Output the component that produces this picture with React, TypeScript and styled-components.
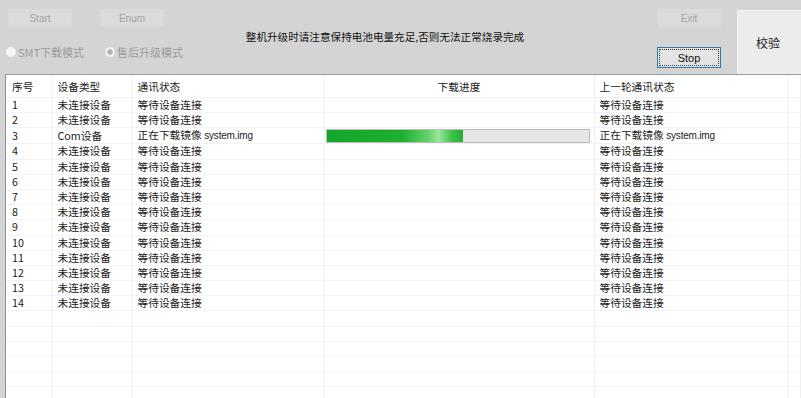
import styled, { createGlobalStyle } from "styled-components";

const GlobalStyle = createGlobalStyle`
  html, body {
    margin: 0;
    padding: 0;
    background: #d4d4d4;
  }
  body {
    font-family: "Liberation Sans", "Noto Sans CJK SC", sans-serif;
    font-size: 11px;
    color: #1e1e1e;
  }
`;

interface DeviceRow {
  id: number;
  type: string;
  status: string;
  file?: string;
  progress?: number;
}

const waiting = "等待设备连接";
const idle = "未连接设备";

const rows: DeviceRow[] = Array.from({ length: 14 }, (_, i) => {
  const id = i + 1;
  if (id === 3) {
    return {
      id,
      type: "Com设备",
      status: "正在下载镜像",
      file: "system.img",
      progress: 52,
    };
  }
  return { id, type: idle, status: waiting };
});

const fillerCount = 7;

const StatusText = ({ row }: { row: DeviceRow }) => (
  <>
    {row.status}
    {row.file && <FileName> {row.file}</FileName>}
  </>
);

const App = () => {
  return (
    <>
      <GlobalStyle />
      <Window>
        <TopPanel>
          <LeftControls>
            <ButtonRow>
              <FlatButton disabled>Start</FlatButton>
              <FlatButton disabled>Enum</FlatButton>
            </ButtonRow>
            <RadioRow>
              <RadioOption>
                <RadioDot />
                SMT下载模式
              </RadioOption>
              <RadioOption>
                <RadioDot $checked />
                售后升级模式
              </RadioOption>
            </RadioRow>
          </LeftControls>
          <Notice>整机升级时请注意保持电池电量充足,否则无法正常烧录完成</Notice>
          <RightControls>
            <FlatButton disabled>Exit</FlatButton>
            <StopButton>
              <FocusRing>Stop</FocusRing>
            </StopButton>
          </RightControls>
          <VerifyButton>校验</VerifyButton>
        </TopPanel>

        <TableArea>
          <Grid>
            <colgroup>
              <col style={{ width: 46 }} />
              <col style={{ width: 80 }} />
              <col style={{ width: 192 }} />
              <col style={{ width: 270 }} />
              <col style={{ width: 193 }} />
              <col />
            </colgroup>
            <thead>
              <tr>
                <HeadCell $first>序号</HeadCell>
                <HeadCell>设备类型</HeadCell>
                <HeadCell>通讯状态</HeadCell>
                <HeadCell $center>下载进度</HeadCell>
                <HeadCell>上一轮通讯状态</HeadCell>
                <HeadCell />
              </tr>
            </thead>
            <tbody>
              {rows.map((row) => (
                <tr key={row.id}>
                  <Cell $first>{row.id}</Cell>
                  <Cell>{row.type}</Cell>
                  <Cell>
                    <StatusText row={row} />
                  </Cell>
                  <ProgressCell>
                    {row.progress !== undefined && (
                      <ProgressTrack>
                        <ProgressFill style={{ width: `${row.progress}%` }} />
                      </ProgressTrack>
                    )}
                  </ProgressCell>
                  <Cell>
                    <StatusText row={row} />
                  </Cell>
                  <Cell />
                </tr>
              ))}
              {Array.from({ length: fillerCount }, (_, i) => (
                <tr key={`f${i}`}>
                  <Cell $first />
                  <Cell />
                  <Cell />
                  <ProgressCell />
                  <Cell />
                  <Cell />
                </tr>
              ))}
            </tbody>
          </Grid>
        </TableArea>
      </Window>
    </>
  );
};

const Window = styled.div`
  width: 801px;
  height: 398px;
  display: flex;
  flex-direction: column;
  overflow: hidden;
  background: #d4d4d4;
`;

const TopPanel = styled.div`
  height: 74px;
  display: grid;
  grid-template-columns: 230px 310px 1fr 64px;
  flex-shrink: 0;
`;

const LeftControls = styled.div`
  display: flex;
  flex-direction: column;
  padding: 9px 0 0 8px;
`;

const ButtonRow = styled.div`
  display: flex;
  gap: 28px;
`;

const FlatButton = styled.button`
  width: 64px;
  height: 18px;
  padding: 0;
  border: 1px solid #d9d9d9;
  background: #dbdbdb;
  color: #a4a4a4;
  font-family: "Liberation Sans", sans-serif;
  font-size: 10px;
`;

const RadioRow = styled.div`
  display: flex;
  gap: 20px;
  margin: 17px 0 0 -3px;
`;

const RadioOption = styled.label`
  display: flex;
  align-items: center;
  gap: 1px;
  color: #9c9c9c;
  font-size: 11px;
  font-family: "Noto Sans CJK SC", sans-serif;
`;

const RadioDot = styled.span<{ $checked?: boolean }>`
  width: 10px;
  height: 10px;
  border-radius: 50%;
  border: 1px solid #cfcfcf;
  background: ${(p) =>
    p.$checked
      ? "radial-gradient(circle, #b4b4b4 0 2.5px, #f4f4f4 3px)"
      : "#f6f6f6"};
`;

const Notice = styled.div`
  padding-top: 29px;
  text-align: center;
  font-family: "Noto Sans CJK SC", sans-serif;
  font-size: 10.6px;
  color: #111;
  white-space: nowrap;
`;

const RightControls = styled.div`
  display: flex;
  flex-direction: column;
  align-items: flex-end;
  padding: 9px 16px 0 0;
  gap: 20px;
`;

const StopButton = styled.button`
  width: 64px;
  height: 21px;
  padding: 1px;
  border: 1px solid #2a7ab8;
  background: #e4e4e4;
  font-family: "Liberation Sans", sans-serif;
  font-size: 11px;
  color: #111;
`;

const FocusRing = styled.span`
  display: flex;
  align-items: center;
  justify-content: center;
  height: 100%;
  border: 1px dotted #333;
  box-sizing: border-box;
`;

const VerifyButton = styled.div`
  margin-top: 10px;
  height: 63px;
  display: flex;
  align-items: center;
  justify-content: center;
  padding-right: 3px;
  background: #ececec;
  border-left: 1px solid #f4f4f4;
  border-top: 1px solid #f4f4f4;
  font-family: "Noto Sans CJK SC", sans-serif;
  font-size: 12px;
  color: #1a1a1a;
`;

const TableArea = styled.div`
  flex: 1;
  margin-left: 5px;
  background: #fff;
  border-left: 1px solid #8f8f8f;
  border-top: 1px solid #9c9c9c;
  overflow: hidden;
`;

const Grid = styled.table`
  width: 100%;
  border-collapse: collapse;
  table-layout: fixed;
  font-family: "Noto Sans CJK SC", sans-serif;
  font-size: 10.7px;
`;

const HeadCell = styled.th<{ $center?: boolean; $first?: boolean }>`
  height: 22px;
  padding: 0 0 0 ${(p) => (p.$center ? 0 : p.$first ? 6 : 5)}px;
  text-align: ${(p) => (p.$center ? "center" : "left")};
  font-weight: normal;
  color: #1a1a1a;
  border-right: 1px solid #f0f0f0;
  border-bottom: 1px solid #f2f2f2;
  white-space: nowrap;
`;

const Cell = styled.td<{ $first?: boolean }>`
  height: 15.2px;
  padding: 0 0 0 ${(p) => (p.$first ? 6 : 5)}px;
  line-height: 14px;
  border-right: 1px solid #f0f0f0;
  border-bottom: 1px solid #f3f3f3;
  white-space: nowrap;
  overflow: hidden;
  box-sizing: border-box;
  color: #1c1c1c;
`;

const FileName = styled.span`
  font-family: "Liberation Sans", sans-serif;
  font-size: 10px;
  letter-spacing: -0.2px;
`;

const ProgressCell = styled(Cell)`
  padding: 0 4px 0 1px;
`;

const ProgressTrack = styled.div`
  height: 14px;
  background: #e6e6e6;
  border: 1px solid #bcbcbc;
  box-sizing: border-box;
  overflow: hidden;
`;

const ProgressFill = styled.div`
  height: 100%;
  background: linear-gradient(
    90deg,
    #13a628 0%,
    #1eaf30 55%,
    #64d46c 75%,
    #9ce89a 82%,
    #3cc046 92%,
    #22b033 100%
  );
`;

export default App;
